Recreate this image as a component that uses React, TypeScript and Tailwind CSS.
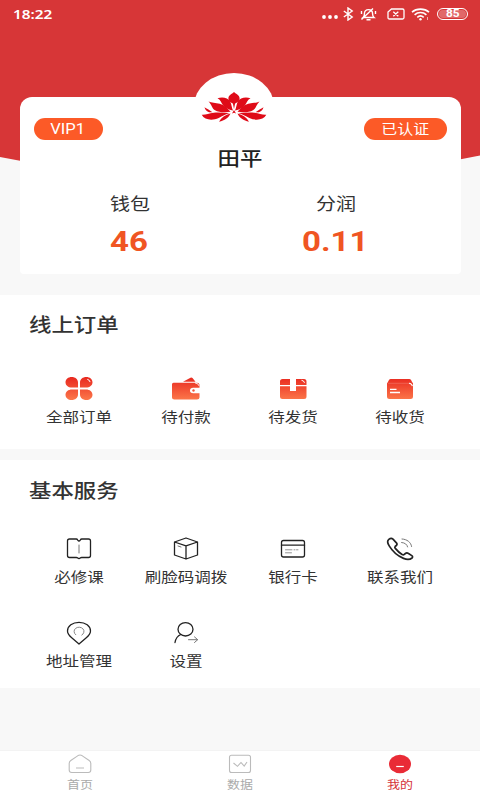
import * as React from 'react';
import { clsx } from 'clsx';

type IconProps = { children: React.ReactNode };

// Wide text: the whole screen uses slightly extended glyphs
function Wide({ className, children }: { className?: string; children: React.ReactNode }) {
  return (
    <span className={clsx('inline-block scale-x-[1.18] whitespace-nowrap', className)}>{children}</span>
  );
}

function LineIcon({ children }: IconProps) {
  return (
    <svg
      width="32"
      height="28"
      viewBox="0 0 32 28"
      fill="none"
      stroke="#222"
      strokeWidth="1.3"
      strokeLinecap="round"
      strokeLinejoin="round"
    >
      {children}
    </svg>
  );
}

function SolidIcon({ children }: IconProps) {
  return (
    <svg width="32" height="28" viewBox="0 0 32 28" fill="url(#orderFill)">
      {children}
    </svg>
  );
}

function StatusBar() {
  return (
    <div className="flex h-7 items-center pl-[13px] pr-3 text-white">
      <span className="w-10 origin-left scale-x-[1.18] text-[13px] font-semibold leading-none">18:22</span>
      <div className="ml-auto flex items-center">
        <svg width="18" height="14" viewBox="0 0 18 14" fill="#fff">
          <circle cx="3" cy="10" r="1.9" />
          <circle cx="9" cy="10" r="1.9" />
          <circle cx="15" cy="10" r="1.9" />
        </svg>
        <svg className="ml-1" width="11" height="14" viewBox="0 0 11 14" fill="none" stroke="#fff" strokeWidth="1.4">
          <path d="M.8 4l8.400 6L5 13V1l4.200 3L.8 10" />
        </svg>
        <svg className="ml-[6px]" width="17" height="14" viewBox="0 0 17 14" fill="none" stroke="#fff" strokeWidth="1.4">
          <path d="M3 10.500c1-.8 1.400-1.600 1.400-3.500C4.400 4.300 6 2.600 8.500 2.600S12.600 4.300 12.600 7c0 1.900.4 2.700 1.400 3.500zM6.500 12.700h4M1.500 12.500L13 1.500M1.500 7V4M15.500 7V4" />
        </svg>
        <svg className="ml-[10px]" width="18" height="12" viewBox="0 0 18 12" fill="none" stroke="#fff" strokeWidth="1.3">
          <path d="M4.500 1H15.500q1.500 0 1.500 1.500v7q0 1.500-1.500 1.500H2.500Q1 11 1 9.500V4zM6.300 3.700l5 4.600M11.300 3.700L6.300 8.300" />
        </svg>
        <svg className="ml-[6px]" width="20" height="13" viewBox="0 0 20 13" fill="none" stroke="#fff" strokeWidth="1.6">
          <path d="M1 4.200C5.500.1 13.500.1 18 4.200M3.600 6.800c3.300-3 8.500-3 11.800 0M6.300 9.300c1.900-1.600 4.500-1.600 6.400 0" />
          <circle cx="9.500" cy="11.300" r="1.200" fill="#fff" stroke="none" />
          <path d="M16.500 9v3" strokeWidth="1" opacity=".6" />
        </svg>
        <div className="ml-[6px] flex h-3 w-[31px] items-center justify-center rounded-full border border-white p-px">
          <span className="flex h-full w-full items-center justify-center rounded-full bg-white/25 font-[Roboto] text-[10px] font-bold leading-none">
            <Wide>85</Wide>
          </span>
        </div>
      </div>
    </div>
  );
}

function Lotus() {
  return (
    <svg width="66" height="32" viewBox="0 0 66 32" fill="#df0b18">
      <path d="M33 1c2.200 2 5.600 3.200 5.600 6.500 0 2.800-2.700 4.300-4.500 5L33 18l-1.100-5.500c-1.800-.7-4.500-2.200-4.500-5C27.400 4.200 30.800 3 33 1z" />
      <LotusSide />
      <g transform="matrix(-1 0 0 1 66 0)">
        <LotusSide />
      </g>
      <path d="M33 19l2 3.500-2-.8-2 .8z" />
    </svg>
  );
}

function LotusSide() {
  return (
    <>
      <path d="M16.500 7.300c4.500-1.500 10.500-.8 12.700 3.200 1.500 2.900 1.300 6 2.800 9-4.500-.8-7.800-2.600-10-5.300-1.900-2.500-2.500-5.600-5.500-6.900z" />
      <path d="M7.500 10.500c3 1.500 7 1.300 11.200 2.300 4.800 1.300 7.300 4 10.800 8-5.500.8-11.500.8-15.500-1.500-3.300-2-3.500-6.300-6.500-8.800z" />
      <path d="M3.500 16.200c1.800 1.300 5 2.600 8 5.100-3.500.4-6.800-.9-8-5.100z" />
      <path d="M.7 23.800c4 .4 7-1.700 12-2.100 5.500-.4 10.800.2 16 .3-4.200 1.200-7.200 3-11 5C11.500 29.800 3.500 29.200.7 23.800z" />
      <path d="M18 30.700c2.500-3.900 6-6.900 11.500-8.100-1.800 4.300-6 7.200-11.500 8.100z" />
    </>
  );
}

function ProfileCard() {
  return (
    <div className="relative mx-auto mt-[69px] h-[177px] w-[441px] rounded-t-xl rounded-b bg-white">
      {/* Avatar bump sits across the top edge of the card */}
      <div className="absolute -top-6 left-[174px] flex h-[66px] w-20 justify-center rounded-[50%] bg-white pt-[18px]">
        <Lotus />
      </div>
      <div className="relative flex items-center justify-between px-[14px] pt-[21px] text-[13.5px] leading-none text-white">
        <span className="flex h-[22px] w-[69px] items-center justify-center rounded-full bg-[#fc5a27]">
          <Wide className="font-[Roboto] text-[14px]">VIP1</Wide>
        </span>
        <span className="flex h-[22px] w-[83px] items-center justify-center rounded-full bg-[#fc5a27] pt-px">
          <Wide>已认证</Wide>
        </span>
      </div>
      <h1 className="mt-[5px] text-center text-[19px] font-medium leading-7 text-[#222]">
        <Wide>田平</Wide>
      </h1>
      <div className="mt-[19px] flex px-[7px] text-center">
        {[
          { label: '钱包', value: '46' },
          { label: '分润', value: '0.11' },
        ].map((item) => (
          <div key={item.label} className="w-[206px]">
            <p className="text-[17px] leading-6 text-[#333]">
              <Wide>{item.label}</Wide>
            </p>
            <p className="mt-[10px] font-[Roboto] text-[28px] font-bold leading-8 text-[#f05523]">
              <Wide>{item.value}</Wide>
            </p>
          </div>
        ))}
      </div>
    </div>
  );
}

function SectionTitle({ children }: { children: React.ReactNode }) {
  return (
    <h2 className="pl-[29px] text-[19px] font-medium leading-7 text-[#333]">
      <Wide className="origin-left">{children}</Wide>
    </h2>
  );
}

type Entry = { label: string; icon: React.ReactNode };

function EntryGrid({ items, className }: { items: Entry[]; className?: string }) {
  return (
    <div className={clsx('grid grid-cols-4 gap-y-[31px] pl-[26px] pr-[27px]', className)}>
      {items.map((item) => (
        <button key={item.label} className="flex flex-col items-center gap-[5px]">
          {item.icon}
          <span className="text-[14px] leading-5 text-[#333]">
            <Wide>{item.label}</Wide>
          </span>
        </button>
      ))}
    </div>
  );
}

const orders: Entry[] = [
  {
    label: '全部订单',
    icon: (
      <SolidIcon>
        <path d="M15 13.600H9c-3.800 0-6.500-2.200-6.500-5.300S5.200 3 8.700 3 15 5.200 15 8.500zM17 13.600h6c3.800 0 6.500-2.200 6.500-5.300S26.800 3 23.300 3 17 5.200 17 8.500zM15 15.400H9c-3.800 0-6.500 2.200-6.500 5.300S5.200 26 8.700 26 15 23.800 15 20.500zM17 15.400h6c3.800 0 6.500 2.200 6.500 5.300S26.800 26 23.300 26 17 23.800 17 20.500z" />
        <path d="M24.300 5.300q2.500.7 2.800 2.800" fill="none" stroke="#fff" strokeWidth="1" />
      </SolidIcon>
    ),
  },
  {
    label: '待付款',
    icon: (
      <SolidIcon>
        <path d="M13 7.700l7.500-4q1.200-.6 2 .4l3 3.600z" />
        <path d="M3.500 8.800H27q2.500 0 2.500 2.500v2.500h-6.300q-3.200 0-3.200 2.700t3.200 2.700h6.300v4.300q0 2-2.500 2H4.300Q2 25.500 2 23.500V10.300q0-1.500 1.500-1.500z" />
        <circle cx="23.500" cy="16.500" r="1.200" />
        <path d="M25 8.800q3 .2 4 3" fill="none" stroke="#fff" strokeWidth="1" />
      </SolidIcon>
    ),
  },
  {
    label: '待发货',
    icon: (
      <SolidIcon>
        <path d="M5.500 5H13v6H3V7.500Q3 5 5.500 5zM19 5h8q2.500 0 2.500 2.500V11H19zM3 12.300h10v4.700h6v-4.700h10.500v10.200q0 2.500-2.500 2.500H5.500Q3 25 3 22.500z" />
        <path d="M14.300 5h3.400v10.300h-3.400z" fill="#fff" />
        <path d="M24.500 6.300q2.500.2 3 2.500" fill="none" stroke="#fff" strokeWidth="1" />
      </SolidIcon>
    ),
  },
  {
    label: '待收货',
    icon: (
      <SolidIcon>
        <path d="M6.800 5h18.400q1.300 0 2 1.200L29 10H3l1.800-3.800q.7-1.200 2-1.200zM3 8.800h26v13.700q0 2.500-2.500 2.500h-21Q3 25 3 22.500z" />
        <path d="M3.500 9.300H25" fill="none" stroke="#fff" strokeWidth=".5" opacity=".35" />
        <path d="M6 15.300h6.500M6 18.500h10" fill="none" stroke="#fff" strokeWidth="1.300" />
        <path d="M25 9.300q2.800.2 3.400 2.800" fill="none" stroke="#fff" strokeWidth="1.100" />
      </SolidIcon>
    ),
  },
];

const services: Entry[] = [
  {
    label: '必修课',
    icon: (
      <LineIcon>
        <path d="M6.500 5h6.700q1 0 1.600 1.100.6.900 1.200.9t1.200-.9Q17.800 5 18.800 5h6.700Q27.500 5 27.500 7v14.500q0 2-2 2h-6.800q-.9 0-1.500.5-.6.600-1.200.6t-1.200-.6q-.6-.5-1.500-.5H6.500q-2 0-2-2V7q0-2 2-2z" />
        <path d="M16 11v8" stroke="#777" strokeWidth="1" />
      </LineIcon>
    ),
  },
  {
    label: '刷脸码调拨',
    icon: (
      <LineIcon>
        <path d="M16 4l11.500 4v13L16 25 4.500 21V8zM4.500 8L16 11.800 27.500 8M16 11.800V25" />
        <path d="M8 12l3 1" stroke="#777" strokeWidth="1" />
      </LineIcon>
    ),
  },
  {
    label: '银行卡',
    icon: (
      <LineIcon>
        <rect x="4.500" y="6.500" width="23" height="16.500" rx="2" />
        <path d="M4.500 11.200h23" />
        <path d="M8.500 15.800h6.500M17 15.800h1M19.500 15.800h1.500M8.500 18.800h6" stroke="#888" strokeWidth=".9" />
      </LineIcon>
    ),
  },
  {
    label: '联系我们',
    icon: (
      <LineIcon>
        <path d="M4.800 5.400C6 4.500 8 4.300 9 5.100l3.400 3.700c.8 1 .7 2-.1 2.700l-1.200 1c-.6.600-.4 1.200.2 1.900 2.200 2.700 4.200 4.500 6.800 6 .9.500 1.500.6 2.200 0l1.100-.9c.9-.7 2.100-.7 3.100 0l3.300 2.100c1 .7 1 1.700.2 2.400-2.200 1.800-5.300 1.700-8.500.4-5.700-2.400-11-7-14.300-12.500C3.400 9.100 3.200 6.700 4.800 5.400z" strokeWidth="1.700" />
        <path d="M18 5c5 .2 9 3.300 9.600 7.500M17.600 8.500c3.300.2 5.500 2 6 4.400" stroke="#777" strokeWidth="1" />
      </LineIcon>
    ),
  },
  {
    label: '地址管理',
    icon: (
      <LineIcon>
        <path d="M16 26l-7.300-6.300C6 17.500 4.500 15.500 4.500 13 4.500 8 9.500 4.300 16 4.300S27.500 8 27.500 13c0 2.500-1.500 4.500-4.200 6.700z" />
        <path d="M12.800 16.800a5 4.300 0 1 1 6 .3" stroke="#888" strokeWidth="1" />
      </LineIcon>
    ),
  },
  {
    label: '设置',
    icon: (
      <LineIcon>
        <ellipse cx="15.500" cy="11.300" rx="7.500" ry="6.700" />
        <path d="M10.800 16.500Q6 18.500 5 24.500" />
        <path d="M18.500 21.700h9M24.500 18.900l3.200 2.800-3.200 2.800" stroke="#777" strokeWidth="1" />
      </LineIcon>
    ),
  },
];

function TabBar() {
  return (
    <nav className="mt-auto grid h-[50px] grid-cols-3 border-t border-[#f3f3f3] bg-white text-[11px] leading-4 text-[#aaa]">
      <div className="flex flex-col items-center pt-[3px]">
        <svg width="24" height="20" viewBox="0 0 24 20" fill="none" stroke="#bbb" strokeWidth="1.1">
          <path d="M10 1.600q2-1.100 4 0l7.200 4.900q1.600 1.100 1.600 3V16q0 2.500-2.500 2.500H3.700q-2.500 0-2.500-2.500V9.500q0-1.900 1.600-3zM8 14h8" />
        </svg>
        <Wide className="mt-[3px]">首页</Wide>
      </div>
      <div className="flex flex-col items-center pt-[3px]">
        <svg width="24" height="20" viewBox="0 0 24 20" fill="none" stroke="#bbb" strokeWidth="1.1">
          <rect x="1.500" y="1.200" width="21" height="17.300" rx="2" />
          <path d="M5.500 9l4 3.300L13 8.500l3.200 3.500 2.800-4" />
        </svg>
        <Wide className="mt-[3px]">数据</Wide>
      </div>
      <div className="flex flex-col items-center pt-[3px] text-[#d5333a]">
        <svg width="24" height="20" viewBox="0 0 24 20">
          <ellipse cx="12" cy="10" rx="11" ry="9.300" fill="#e92b36" />
          <path d="M8.200 12.500h7.600" stroke="#fff" strokeWidth="1.200" />
        </svg>
        <Wide className="mt-[3px]">我的</Wide>
      </div>
    </nav>
  );
}

export default function App() {
  return (
    <div className="relative flex h-[800px] w-[480px] flex-col overflow-hidden bg-[#f8f8f8] font-['Noto_Sans','Noto_Sans_CJK_SC',sans-serif]">
      {/* Gradient shared by the order icons */}
      <svg className="absolute" width="0" height="0">
        <defs>
          <linearGradient id="orderFill" gradientUnits="userSpaceOnUse" x1="0" y1="3" x2="0" y2="25">
            <stop offset="0" stopColor="#e8281f" />
            <stop offset="1" stopColor="#fb7448" />
          </linearGradient>
        </defs>
      </svg>

      {/* Curved header backdrop */}
      <svg className="absolute left-0 top-0" width="480" height="190" viewBox="0 0 480 190">
        <path d="M0 0h480v155.500Q240 205 0 157z" fill="#d73637" />
      </svg>

      <div className="relative">
        <StatusBar />
        <ProfileCard />
      </div>

      <section className="mt-[21px] h-[154px] bg-white pt-4">
        <SectionTitle>线上订单</SectionTitle>
        <EntryGrid items={orders} className="mt-[35px]" />
      </section>

      <section className="mt-[11px] h-[228px] bg-white pt-[17px]">
        <SectionTitle>基本服务</SectionTitle>
        <EntryGrid items={services} className="mt-[29px]" />
      </section>

      <TabBar />
    </div>
  );
}
